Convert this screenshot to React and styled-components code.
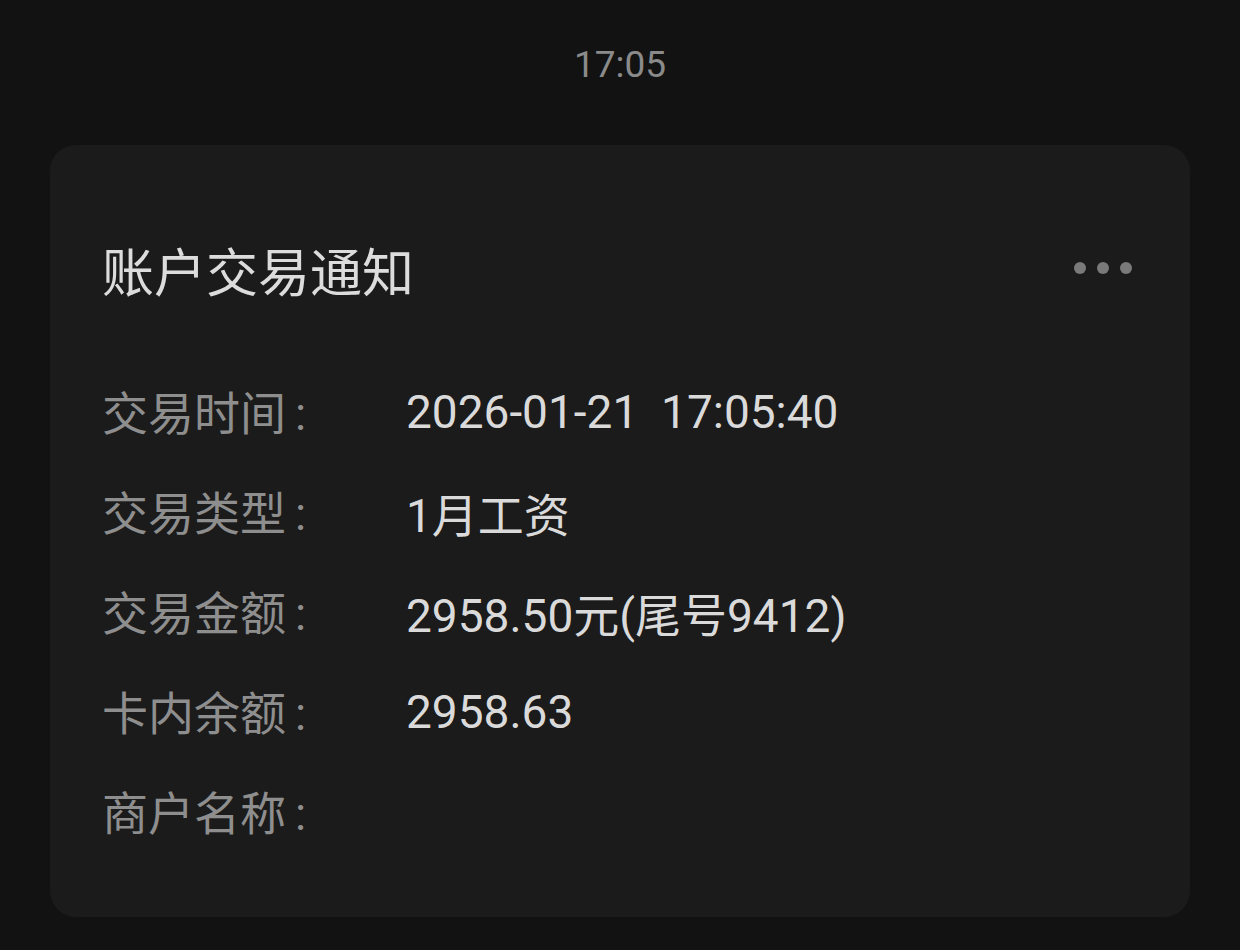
import React from "react";
import styled, { createGlobalStyle } from "styled-components";

const GlobalStyle = createGlobalStyle`
  html, body {
    margin: 0;
    padding: 0;
    background: #121212;
  }
  body {
    font-family: Roboto, "Noto Sans CJK SC", "Noto Sans", sans-serif;
  }
`;

const Page = styled.div`
  width: 1240px;
  height: 950px;
  box-sizing: border-box;
  padding: 0 50px;
  display: flex;
  flex-direction: column;
  overflow: hidden;
`;

const Stamp = styled.div`
  height: 145px;
  box-sizing: border-box;
  padding-top: 44px;
  text-align: center;
  font-size: 37px;
  line-height: 42px;
  color: #8a8a8a;
`;

const Card = styled.div`
  background: #1b1b1b;
  border-radius: 26px;
  padding: 89px 52px 55px;
  display: flex;
  flex-direction: column;
`;

const Header = styled.div`
  display: flex;
  align-items: center;
  justify-content: space-between;
  height: 72px;
  margin-bottom: 56px;
`;

const Title = styled.h1`
  margin: 0;
  font-family: "Noto Sans CJK SC", sans-serif;
  font-weight: 400;
  font-size: 52px;
  line-height: 72px;
  color: #dcdcdc;
`;

const More = styled.div`
  display: flex;
  gap: 11px;
  margin-right: 6px;
  margin-bottom: 4px;
`;

const Dot = styled.span`
  width: 12px;
  height: 12px;
  border-radius: 50%;
  background: #7a7a7a;
`;

const Row = styled.div`
  display: grid;
  grid-template-columns: 304px 1fr;
  height: 100px;
  align-items: center;
`;

const Label = styled.div`
  font-family: "Noto Sans CJK SC", sans-serif;
  font-size: 46px;
  line-height: 60px;
  color: #8e8e8e;
  white-space: pre;
`;

const Colon = styled.span`
  font-family: Roboto, sans-serif;
  margin-left: 9px;
`;

const Value = styled.div`
  font-family: Roboto, "Noto Sans CJK SC", sans-serif;
  font-size: 46px;
  color: #dadada;
  white-space: pre;
`;

const rows = [
  ["交易时间", "2026-01-21  17:05:40"],
  ["交易类型", "1月工资"],
  ["交易金额", "2958.50元(尾号9412)"],
  ["卡内余额", "2958.63"],
  ["商户名称", ""],
];

export default function App() {
  return (
    <>
      <GlobalStyle />
      <Page>
        <Stamp>17:05</Stamp>
        <Card>
          <Header>
            <Title>账户交易通知</Title>
            <More>
              <Dot />
              <Dot />
              <Dot />
            </More>
          </Header>
          {rows.map(([k, v]) => (
            <Row key={k}>
              <Label>
                {k}
                <Colon>:</Colon>
              </Label>
              <Value>{v}</Value>
            </Row>
          ))}
        </Card>
      </Page>
    </>
  );
}
